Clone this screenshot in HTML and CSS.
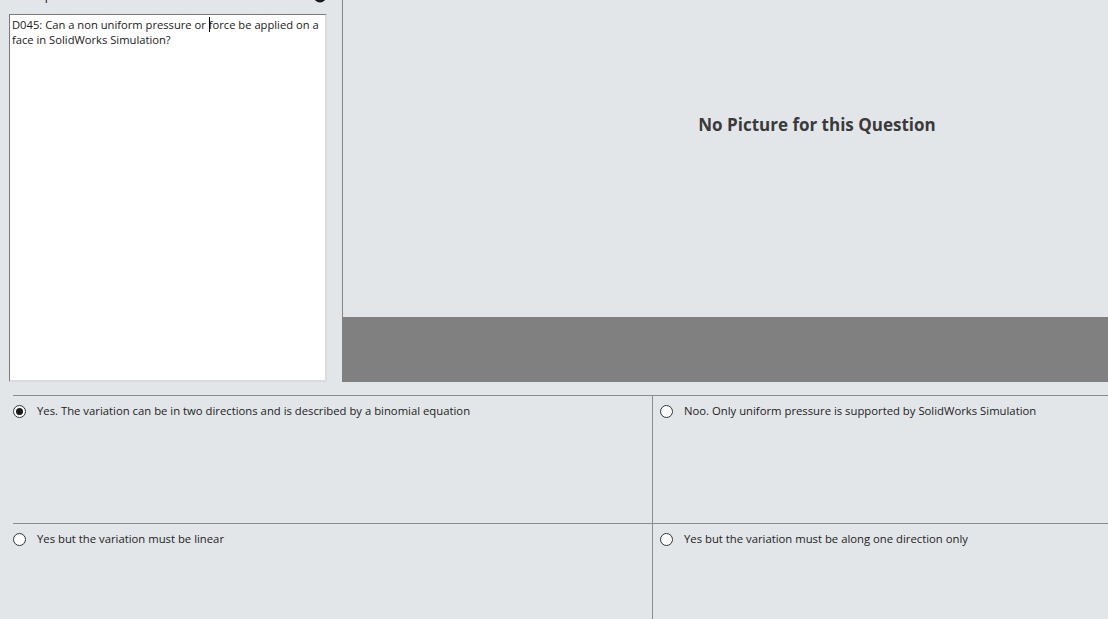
FILE: index.html
```html
<!DOCTYPE html>
<html>
<head>
<meta charset="utf-8">
<link rel="stylesheet" href="styles.css">
</head>
<body>
<div class="app">
  <div class="top">
    <div class="left-col">
      <div class="label-row">
        <span class="label">Description</span>
        <svg class="help" width="14" height="14" viewBox="0 0 14 14"><circle cx="7" cy="7" r="6.5" fill="#1a1a1a"/></svg>
      </div>
      <div class="textbox">D045: Can a non uniform pressure or <span class="caret"></span>force be applied on a face in SolidWorks Simulation?</div>
    </div>
    <div class="right-col">
      <div class="picture">
        <span class="no-pic">No Picture for this Question</span>
      </div>
      <div class="pic-bar"></div>
    </div>
  </div>
  <div class="answers">
    <div class="cell cell-left">
      <span class="radio checked"></span>
      <span class="answer-text">Yes. The variation can be in two directions and is described by a binomial equation</span>
    </div>
    <div class="cell cell-right">
      <span class="radio"></span>
      <span class="answer-text">Noo. Only uniform pressure is supported by SolidWorks Simulation</span>
    </div>
    <div class="cell cell-left row2">
      <span class="radio"></span>
      <span class="answer-text">Yes but the variation must be linear</span>
    </div>
    <div class="cell cell-right row2">
      <span class="radio"></span>
      <span class="answer-text">Yes but the variation must be along one direction only</span>
    </div>
  </div>
</div>
</body>
</html>
```

FILE: styles.css
```css
html, body {
  margin: 0;
  padding: 0;
  height: 100%;
  overflow: hidden;
  background: #e3e6e9;
}

.app {
  width: 1300px;
  font-family: "Open Sans", "Noto Sans", sans-serif;
  font-size: 11.3px;
  color: #222;
}

.top {
  display: flex;
  height: 382px;
}

.left-col {
  width: 342px;
  flex: none;
  display: flex;
  flex-direction: column;
}

.label-row {
  height: 20px;
  margin-top: -17px;
  display: flex;
  align-items: flex-end;
  justify-content: space-between;
  padding: 0 15px 0 10px;
  line-height: 15px;
}

.label {
  font-size: 12px;
  color: #111;
}

.help {
  display: block;
}

.textbox {
  margin: 11px 0 0 9px;
  width: 318px;
  height: 368px;
  box-sizing: border-box;
  background: #fff;
  border-top: 1px solid #7a7a7a;
  border-left: 1px solid #7a7a7a;
  border-right: 2px solid #d9dbde;
  border-bottom: 2px solid #d9dbde;
  padding: 2px 2px 0 2px;
  font-size: 11.2px;
  line-height: 15px;
  color: #1a1a1a;
}

.caret {
  display: inline-block;
  width: 1px;
  height: 15px;
  background: #000;
  vertical-align: top;
  margin-right: -1px;
}

.right-col {
  flex: none;
  width: 949px;
  display: flex;
  flex-direction: column;
}

.picture {
  height: 317px;
  border-left: 1px solid #858585;
  box-sizing: border-box;
  display: flex;
  justify-content: center;
  padding-top: 113px;
}

.no-pic {
  font-size: 17px;
  font-weight: 700;
  color: #3a3a3a;
  line-height: 24px;
  height: 24px;
}

.pic-bar {
  height: 65px;
  background: #808080;
}

.answers {
  margin: 13px 0 0 13px;
  display: grid;
  grid-template-columns: 639px 640px;
  grid-auto-rows: 127px;
  border-top: 1px solid #8c8c8c;
}

.cell {
  display: flex;
  align-items: flex-start;
  padding-top: 8px;
  box-sizing: border-box;
}

.cell-right {
  border-left: 1px solid #8c8c8c;
  padding-left: 7px;
}

.row2 {
  border-top: 1px solid #8c8c8c;
}

.radio {
  width: 13px;
  height: 13px;
  box-sizing: border-box;
  border: 1px solid #333;
  border-radius: 50%;
  background: #fff;
  flex: none;
  position: relative;
  margin-top: 1px;
}

.radio.checked::after {
  content: "";
  position: absolute;
  left: 2px;
  top: 2px;
  width: 7px;
  height: 7px;
  border-radius: 50%;
  background: #1a1a1a;
}

.answer-text {
  margin-left: 11px;
  margin-top: -1px;
  line-height: 15px;
  color: #222;
}
```
